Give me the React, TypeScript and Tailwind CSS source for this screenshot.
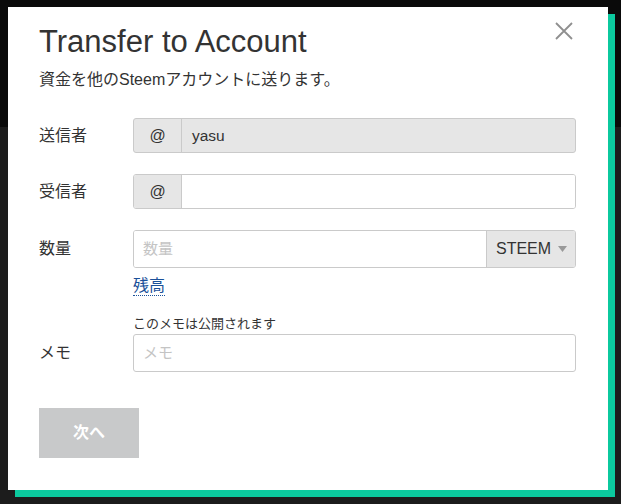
import React from "react";

const font = { fontFamily: '"Liberation Sans", "Noto Sans CJK JP", Arial, sans-serif' };

function Label({ children, h }: { children: React.ReactNode; h: string }) {
  return (
    <div className={`w-[94px] shrink-0 text-[16px] text-[#333] ${h}`}>{children}</div>
  );
}

export default function App() {
  return (
    <div className="relative w-[621px] h-[504px] overflow-hidden bg-[#1c1c1c]" style={font}>
      <div className="h-[127px] bg-[#0a0a0a]" />
      <div className="absolute left-[8px] top-[7px] w-[600px] h-[483px] bg-white shadow-[7px_7px_0_#0bc99e] pl-[31px] pr-[32px] pt-[18px]">
        <button className="absolute left-[538px] top-[6px] w-[35px] h-[35px] flex items-center justify-center">
          <svg width="18" height="18" viewBox="0 0 18 18">
            <path d="M1 1 L17 17 M17 1 L1 17" stroke="#8f8f8f" strokeWidth="1.8" fill="none" />
          </svg>
        </button>
        <h1 className="text-[31px] leading-[34px] text-[#333] font-normal">Transfer to Account</h1>
        <p className="mt-[10px] text-[16px] leading-[22px] text-[#333]">資金を他のSteemアカウントに送ります。</p>

        <div className="mt-[27px] flex">
          <Label h="leading-[35px]">送信者</Label>
          <div className="flex-1 flex h-[35px] border border-[#cacaca] rounded-[3px] bg-[#e6e6e6]">
            <div className="w-[48px] flex items-center justify-center border-r border-[#cacaca] text-[16px] text-[#333]">@</div>
            <div className="flex-1 flex items-center pl-[10px] text-[15.5px] text-[#333]">yasu</div>
          </div>
        </div>

        <div className="mt-[21px] flex">
          <Label h="leading-[35px]">受信者</Label>
          <div className="flex-1 flex h-[35px] border border-[#cacaca] rounded-[3px] overflow-hidden">
            <div className="w-[48px] flex items-center justify-center border-r border-[#cacaca] bg-[#e6e6e6] text-[16px] text-[#333]">@</div>
            <div className="flex-1 bg-white" />
          </div>
        </div>

        <div className="mt-[21px] flex">
          <Label h="leading-[38px]">数量</Label>
          <div className="flex-1 flex flex-col items-start">
            <div className="w-full flex h-[38px] border border-[#cacaca] rounded-[3px] overflow-hidden">
              <div className="flex-1 flex items-center pl-[9px] text-[15px] text-[#c4c4c4] bg-white">数量</div>
              <div className="w-[89px] flex items-center pl-[9px] gap-[7px] border-l border-[#cacaca] bg-[#e6e6e6] text-[16px] text-[#333]">
                <span>STEEM</span>
                <svg width="9" height="6" viewBox="0 0 9 6"><path d="M0 0 L9 0 L4.5 6 Z" fill="#999" /></svg>
              </div>
            </div>
            <span className="mt-[8px] inline-block text-[16px] leading-[19px] text-[#1a5099] border-b border-dotted border-[#1a5099]">残高</span>
          </div>
        </div>

        <div className="mt-[20px] flex">
          <Label h="pt-[18px] leading-[38px]">メモ</Label>
          <div className="flex-1 flex flex-col">
            <div className="text-[13px] leading-[16px] mb-[2px] text-[#333]">このメモは公開されます</div>
            <div className="h-[38px] border border-[#cacaca] rounded-[3px] flex items-center pl-[9px] text-[15px] text-[#c4c4c4]">メモ</div>
          </div>
        </div>

        <button className="mt-[36px] w-[100px] h-[50px] bg-[#c8c9ca] text-white text-[16px] font-bold">次へ</button>
      </div>
    </div>
  );
}
